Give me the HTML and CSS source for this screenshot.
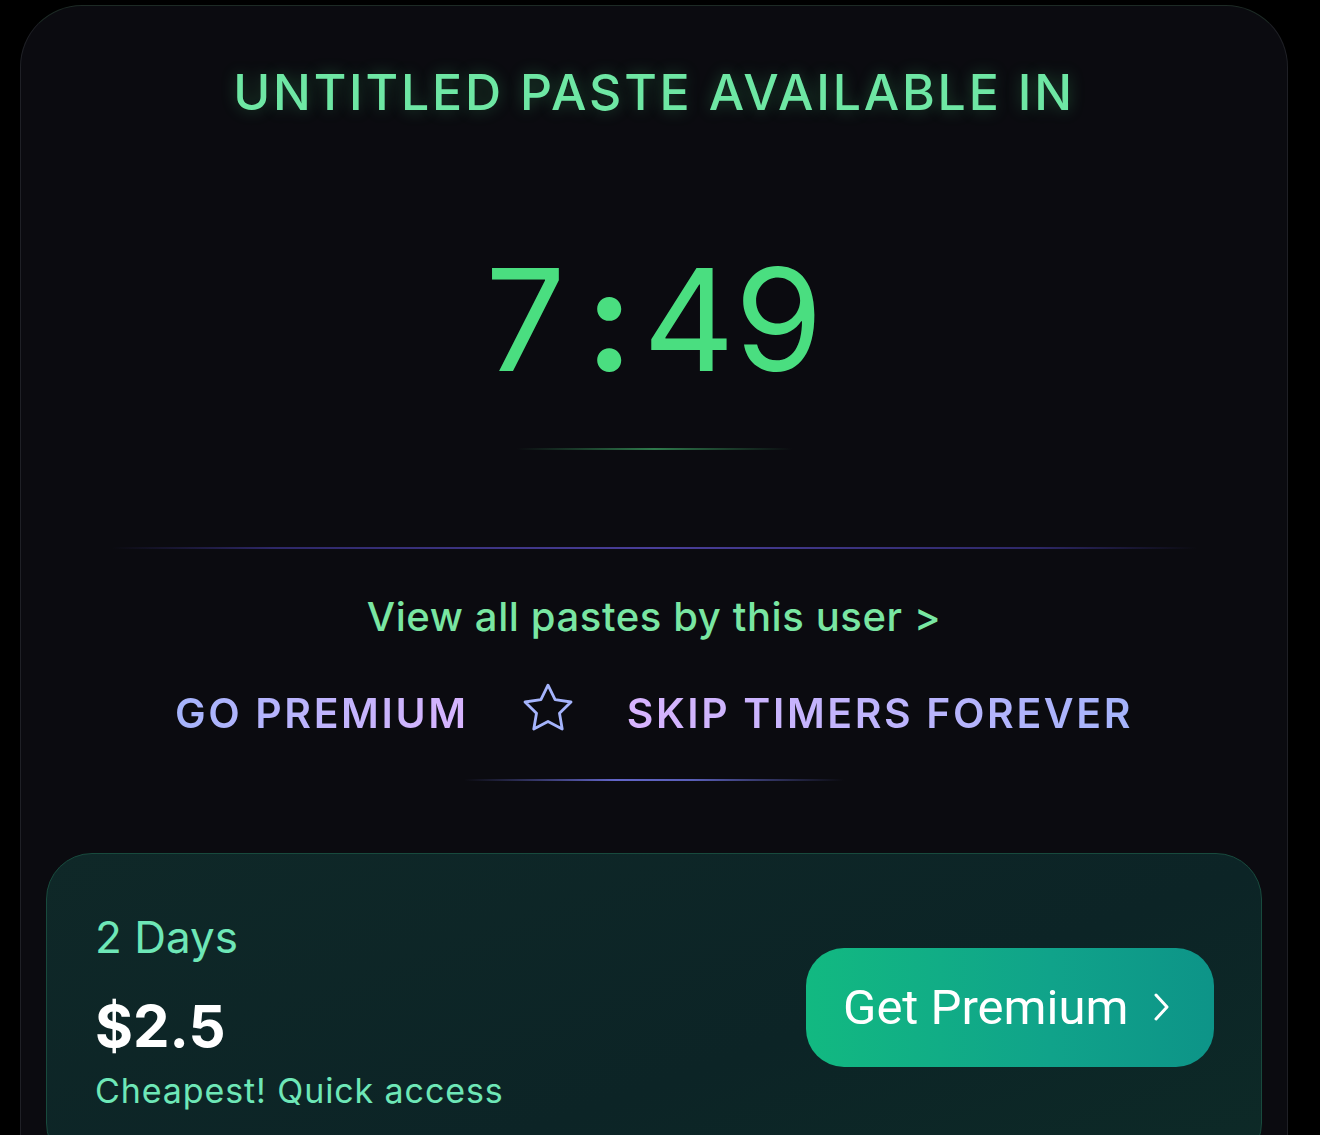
FILE: index.html
```html
<!DOCTYPE html>
<html>
<head>
    <title>Untitled paste</title>
    <link rel="stylesheet" href="styles.css">
</head>
<body>
    <div class="card">
        <h1 class="title">UNTITLED PASTE AVAILABLE IN</h1>

        <div class="timer">7<span class="colon">:</span>49</div>
        <div class="timer-line"></div>

        <div class="divider"></div>

        <a class="user-link" href="#">View all pastes by this user &gt;</a>

        <div class="premium-row">
            <span class="go">GO PREMIUM</span>
            <svg class="star" width="66" height="62" viewBox="0 0 24 24" fill="none" stroke="#a5b4fc" stroke-width="1.1" stroke-linejoin="round">
                <path d="M12 2.8l2.75 5.6 6.15.9-4.45 4.35 1.05 6.1L12 16.85 6.5 19.75l1.05-6.1L3.1 9.3l6.15-.9z"/>
            </svg>
            <span class="skip">SKIP TIMERS FOREVER</span>
        </div>
        <div class="premium-line"></div>

        <div class="plan">
            <div class="plan-info">
                <div class="plan-name">2 Days</div>
                <div class="plan-price">$2.5</div>
                <div class="plan-note">Cheapest! Quick access</div>
            </div>
            <a class="buy" href="#">Get Premium
                <svg width="20" height="32" viewBox="0 0 20 32" fill="none" stroke="#fff" stroke-width="3" stroke-linecap="round" stroke-linejoin="round"><path d="M4 4l11 12-11 12"/></svg>
            </a>
        </div>
    </div>
</body>
</html>
```
FILE: styles.css
```css
html, body {margin:0;padding:0;background:#000;}
body {font-family:Inter, "Noto Sans", sans-serif;overflow:hidden;height:1135px;}

/* outer card */
.card {
    margin:5px 32px 0 20px;
    min-height:1300px;
    box-sizing:border-box;
    padding:56px 25px 0 25px;
    background:#0b0b10;
    border:1px solid #1f2026;
    border-top-color:#1d2a25;
    border-radius:62px;
    display:flex;flex-direction:column;align-items:center;
}

.title {
    margin:0;
    font-size:50px;line-height:60px;font-weight:500;
    letter-spacing:2.8px;
    color:#6ee7a4;
    text-shadow:0 0 16px rgba(74,222,128,0.3);
}

.timer {
    margin-top:122px;
    font-size:142px;line-height:150px;font-weight:400;
    letter-spacing:0;
    color:#4ade80;
}
.colon {font-weight:700;margin:0 10px 0 20px;}
.timer-line {
    margin-top:54px;width:275px;height:2px;
    background:linear-gradient(90deg, transparent, #2f7a4c 50%, transparent);
}

.divider {
    margin-top:97px;width:1085px;height:2px;
    background:linear-gradient(90deg, transparent, #2e2868 15%, #4a3f9a 50%, #2e2868 85%, transparent);
}

.user-link {
    margin-top:45px;
    font-size:40px;line-height:46px;font-weight:500;
    letter-spacing:0.6px;
    color:#79e6a2;text-decoration:none;
}

.premium-row {
    margin-top:46px;
    display:flex;align-items:center;gap:50px;
    font-size:41px;line-height:50px;font-weight:600;
    letter-spacing:2.6px;
}
.go, .skip {-webkit-background-clip:text;background-clip:text;color:transparent;}
.go {background-image:linear-gradient(90deg, #a5b4fc, #d8b4fe);}
.skip {background-image:linear-gradient(90deg, #d8b4fe, #a5b4fc);}
.star {margin:-8px -4px 0 -4px;}
.premium-line {
    margin-top:39px;width:380px;height:2px;
    background:linear-gradient(90deg, transparent, #6366c8 40%, #5a5fb8 60%, transparent);
}

/* plan card */
.plan {
    margin-top:72px;align-self:stretch;
    box-sizing:border-box;
    padding:57px 47px 57px 48px;
    border:1px solid #184a3d;
    border-radius:46px;
    background:linear-gradient(160deg, #0f2828, #0c2426 60%, #0d2a27);
    display:flex;align-items:center;justify-content:space-between;
}
.plan-name {font-size:44px;line-height:53px;color:#6ee7b7;}
.plan-price {margin-top:27px;font-size:58px;line-height:70px;font-weight:700;color:#fff;}
.plan-note {margin-top:9px;font-size:34px;line-height:41px;color:#6ee7b7;letter-spacing:0.9px;}

.buy {
    width:408px;height:119px;box-sizing:border-box;
    padding-left:37px;
    display:flex;align-items:center;gap:24px;
    border-radius:38px;
    background:linear-gradient(90deg, #12b981, #10a38a 60%, #0d9488);
    color:#fff;text-decoration:none;
    font-family:Roboto, Inter, sans-serif;font-size:49px;
    margin-top:-8px;
}
```
